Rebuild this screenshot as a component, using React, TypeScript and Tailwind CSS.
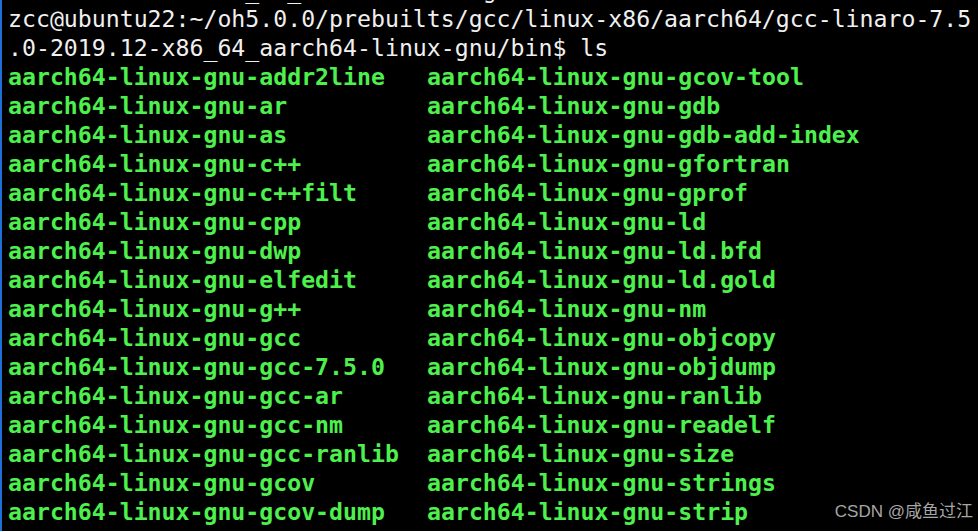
const col1 = [
  "aarch64-linux-gnu-addr2line",
  "aarch64-linux-gnu-ar",
  "aarch64-linux-gnu-as",
  "aarch64-linux-gnu-c++",
  "aarch64-linux-gnu-c++filt",
  "aarch64-linux-gnu-cpp",
  "aarch64-linux-gnu-dwp",
  "aarch64-linux-gnu-elfedit",
  "aarch64-linux-gnu-g++",
  "aarch64-linux-gnu-gcc",
  "aarch64-linux-gnu-gcc-7.5.0",
  "aarch64-linux-gnu-gcc-ar",
  "aarch64-linux-gnu-gcc-nm",
  "aarch64-linux-gnu-gcc-ranlib",
  "aarch64-linux-gnu-gcov",
  "aarch64-linux-gnu-gcov-dump",
];

const col2 = [
  "aarch64-linux-gnu-gcov-tool",
  "aarch64-linux-gnu-gdb",
  "aarch64-linux-gnu-gdb-add-index",
  "aarch64-linux-gnu-gfortran",
  "aarch64-linux-gnu-gprof",
  "aarch64-linux-gnu-ld",
  "aarch64-linux-gnu-ld.bfd",
  "aarch64-linux-gnu-ld.gold",
  "aarch64-linux-gnu-nm",
  "aarch64-linux-gnu-objcopy",
  "aarch64-linux-gnu-objdump",
  "aarch64-linux-gnu-ranlib",
  "aarch64-linux-gnu-readelf",
  "aarch64-linux-gnu-size",
  "aarch64-linux-gnu-strings",
  "aarch64-linux-gnu-strip",
];

export default function App() {
  return (
    <div className="relative w-[978px] h-[531px] overflow-hidden bg-black border-l-2 border-[#1f6fd6]">
      <div className="pl-[6px] font-['DejaVu_Sans_Mono',monospace] text-[23.2px] leading-[29px] whitespace-pre">
        {/* tail of the previous line, mostly scrolled away */}
        <div className="mt-[-25px] text-[#f0f0f0]">{"                 _  _             g"}</div>
        <div className="text-[#f0f0f0]">zcc@ubuntu22:~/oh5.0.0/prebuilts/gcc/linux-x86/aarch64/gcc-linaro-7.5</div>
        <div className="text-[#f0f0f0]">.0-2019.12-x86_64_aarch64-linux-gnu/bin$ ls</div>
        <div className="flex font-bold text-[#4ef04e]">
          <div className="w-[419px]">
            {col1.map((name) => (
              <div key={name}>{name}</div>
            ))}
          </div>
          <div>
            {col2.map((name) => (
              <div key={name}>{name}</div>
            ))}
          </div>
        </div>
      </div>
      <div className="absolute right-[5px] bottom-[9px] text-[17px] leading-[20px] text-[#a6a6a6] font-['Liberation_Sans','Noto_Sans_CJK_SC',sans-serif]">
        CSDN @咸鱼过江
      </div>
    </div>
  );
}
